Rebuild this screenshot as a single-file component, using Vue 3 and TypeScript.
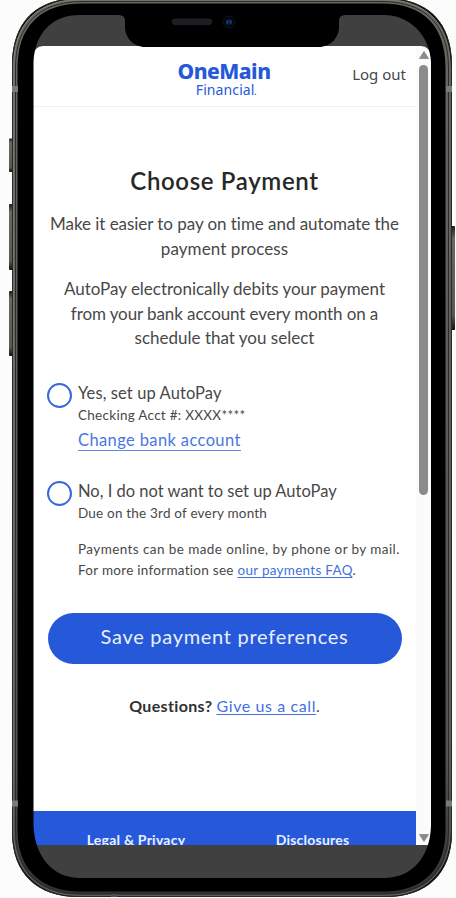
<script setup lang="ts">
interface PaymentOption {
  id: string
  title: string
  detail: string
}

const autoPay: PaymentOption = {
  id: 'autopay',
  title: 'Yes, set up AutoPay',
  detail: 'Checking Acct #: XXXX****',
}

const manualPay: PaymentOption = {
  id: 'manual',
  title: 'No, I do not want to set up AutoPay',
  detail: 'Due on the 3rd of every month',
}

const footerLinks: string[] = ['Legal & Privacy', 'Disclosures']
</script>

<template>
  <main class="stage">
    <div class="screen">
      <div class="page">
        <header class="header">
          <div class="logo">
            <span class="logo-top">OneMain</span>
            <span class="logo-sub">Financial<i>.</i></span>
          </div>
          <a class="logout">Log out</a>
        </header>

        <section class="intro">
          <h1>Choose Payment</h1>
          <p>
            <span class="l1">Make it easier to pay on time and automate the</span><br />
            <span class="l2">payment process</span>
          </p>
          <p>
            <span class="l3">AutoPay electronically debits your payment</span><br />
            <span class="l4">from your bank account every month on a</span><br />
            <span class="l5">schedule that you select</span>
          </p>
        </section>

        <section class="options">
          <div class="option">
            <span class="radio" role="radio"></span>
            <div class="body">
              <div class="title t1">{{ autoPay.title }}</div>
              <div class="detail d1">{{ autoPay.detail }}</div>
              <a class="change">Change bank account</a>
            </div>
          </div>
          <div class="option second">
            <span class="radio" role="radio"></span>
            <div class="body">
              <div class="title">{{ manualPay.title }}</div>
              <div class="detail d2">{{ manualPay.detail }}</div>
              <div class="note">
                <span class="n1">Payments can be made online, by phone or by mail.</span><br />
                <span class="n2">For more information see <a>our payments FAQ</a>.</span>
              </div>
            </div>
          </div>
        </section>

        <button class="save">Save payment preferences</button>
        <div class="questions"><b>Questions?</b> <a>Give us a call</a>.</div>

        <footer class="footer">
          <span v-for="link in footerLinks" :key="link">{{ link }}</span>
        </footer>
      </div>
      <div class="scrollbar">
        <svg class="arrow" viewBox="0 0 10 8"><path d="M5 .6 9.4 7.4H.6Z" /></svg>
        <div class="thumb"></div>
        <svg class="arrow down" viewBox="0 0 10 8"><path d="M.6.6H9.4L5 7.4Z" /></svg>
      </div>
    </div>

    <svg class="phone" viewBox="0 0 456 898" fill="none">
      <defs>
        <linearGradient id="key" x1="0" y1="0" x2="0" y2="1">
          <stop offset="0" stop-color="#1c1c1a" />
          <stop offset=".12" stop-color="#686862" />
          <stop offset=".86" stop-color="#5a5a55" />
          <stop offset="1" stop-color="#111" />
        </linearGradient>
        <linearGradient id="rim" x1="0" y1="0" x2="0" y2="1">
          <stop offset="0" stop-color="#68665f" />
          <stop offset=".85" stop-color="#55534f" />
          <stop offset="1" stop-color="#33322f" />
        </linearGradient>
      </defs>
      <g fill="url(#key)">
        <rect x="9" y="138.5" width="4" height="33.5" rx="1" />
        <rect x="9" y="204" width="4" height="66" rx="1" />
        <rect x="9" y="291" width="4" height="65" rx="1" />
        <rect x="451" y="226" width="4" height="104" rx="1" />
      </g>
      <path
        fill="#000"
        fill-rule="evenodd"
        d="M12 66C12 22 36-2 80-2H384C428-2 452 22 452 66V832C452 874 426 897 386 897H78C38 897 12 874 12 832ZM33.500 62C35 33 52 15 80 15H119Q125 15 125 21V27C125 38 134 47 145 47H319C330 47 339 38 339 27V21Q339 15 345 15H384C410 15 430 36 431 62V826C430 858 411 878 384 878H80C54 878 35 858 33.500 826Z"
      />
      <path
        stroke="url(#rim)"
        stroke-width="5"
        d="M15 68C15 25 39 1 82 1H382C425 1 448 25 448 68V830C448 871 424 894 384 894H80C40 894 15 871 15 830Z"
      />
      <path
        stroke="#292826"
        stroke-width="1"
        d="M12.500 66C12.500 22 36-1.500 80-1.500H384C428-1.500 451.500 22 451.500 66V832C451.500 874 426 896.500 386 896.500H78C38 896.500 12.500 874 12.500 832Z"
      />
      <path
        stroke="#2c2b29"
        stroke-width="1"
        d="M15.500 68C15.500 25 39 1.500 82 1.500H382C425 1.500 448.500 25 448.500 68V830C448.500 871 424 893.500 384 893.500H80C40 893.500 15.500 871 15.500 830Z"
      />
      <path
        stroke="#918f89"
        stroke-width=".6"
        d="M13.800 67C13.800 23 37 0 81 0H383C427 0 450.300 23 450.300 67V831C450.300 872 425 895.300 385 895.300H79C39 895.300 13.800 872 13.800 831Z"
      />
      <g fill="#757b7e">
        <rect x="12" y="86" width="6" height="6" />
        <rect x="446" y="86" width="6" height="6" />
        <rect x="12" y="800.500" width="6" height="6" />
        <rect x="446" y="800.500" width="6" height="6" />
        <rect x="111" y="894" width="6" height="3" fill="#4b5055" />
      </g>
      <rect x="172" y="18.500" width="40" height="6.500" rx="3.250" fill="#1d1e22" />
      <circle cx="229" cy="22" r="6" fill="#06070b" stroke="#131417" />
      <circle cx="229" cy="22" r="3" fill="#071d42" />
      <path d="M227.300 20.500v3M230.800 20.500v3" stroke="#1750a0" stroke-width="1.200" />
    </svg>
  </main>
</template>

<style>
body {
  margin: 0;
  background: #fcfcfc;
}
</style>

<style scoped>
* {
  box-sizing: border-box;
}
.stage {
  position: relative;
  width: 456px;
  height: 898px;
  overflow: hidden;
  padding: 15px 25px 20px 33px;
  font-family: Lato, "Open Sans", sans-serif;
  font-variant-ligatures: none;
  color: #484848;
}
.screen {
  display: flex;
  height: 863px;
  padding: 31px 0 33px;
  background: #404040;
  border-radius: 36px;
}
.phone {
  position: absolute;
  inset: 0;
  width: 456px;
  height: 898px;
  pointer-events: none;
}
.page {
  flex: none;
  width: 383px;
  height: 799px;
  display: flex;
  flex-direction: column;
  overflow: hidden;
  background: #fff;
  border-top-left-radius: 10px;
  white-space: nowrap;
}
.header {
  flex: none;
  height: 61px;
  border-bottom: 1px solid #f0f0ee;
  display: grid;
  grid-template-columns: 1fr auto 1fr;
  padding: 14px 10px 0;
}
.logo {
  grid-column: 2;
  display: flex;
  flex-direction: column;
  align-items: center;
  color: #2559da;
  font-family: "Noto Sans", sans-serif;
}
.logo-top {
  margin-right: 1px;
  font-size: 21px;
  line-height: 23px;
  font-weight: 800;
  letter-spacing: -0.5px;
}
.logo-sub {
  margin-left: 4px;
  font-size: 14px;
  line-height: 14px;
  letter-spacing: 0.1px;
}
.logo-sub i {
  font-size: 10px;
}
.logout {
  justify-self: end;
  font-family: "Noto Sans", sans-serif;
  font-size: 15px;
  line-height: 28px;
}
.intro {
  flex: none;
  padding-top: 57px;
  text-align: center;
}
h1 {
  margin: 0 0 14px;
  font-size: 24px;
  line-height: 34px;
  font-weight: 600;
  letter-spacing: 0.65px;
  color: #282828;
}
.intro p {
  margin: 0 0 16px;
  font-size: 17px;
  line-height: 24.600px;
}
.l1 {
  letter-spacing: -0.05px;
}
.l4 {
  letter-spacing: -0.09px;
}
.l2 {
  letter-spacing: 0.1px;
}
.l3 {
  letter-spacing: -0.02px;
}
.options {
  flex: none;
  padding: 14px 14px 0;
}
.option {
  display: flex;
  gap: 6px;
  height: 98px;
}
.option.second {
  height: 119px;
}
.radio {
  flex: none;
  width: 25px;
  height: 25px;
  margin-top: 2px;
  border: 2px solid #3768df;
  border-radius: 50%;
}
.title {
  font-size: 16.500px;
  line-height: 24px;
}
.t1 {
  letter-spacing: 0.1px;
}
.detail {
  font-size: 13.500px;
  line-height: 20px;
}
.d1 {
  letter-spacing: 0.28px;
}
.d2 {
  letter-spacing: 0.2px;
}
.change {
  display: inline-block;
  margin-top: 5px;
  font-size: 16.500px;
  line-height: 20px;
  letter-spacing: 0.38px;
  color: #4a76e3;
  border-bottom: 1px solid #6088e6;
}
.note {
  margin-top: 16px;
  font-size: 13.500px;
  line-height: 21.500px;
}
.n1 {
  letter-spacing: 0.42px;
}
.n2 {
  letter-spacing: 0.28px;
}
.note a,
.questions a {
  color: #4471df;
  text-decoration: underline;
  text-decoration-thickness: 1px;
  text-underline-offset: 2px;
}
.save {
  flex: none;
  width: 354px;
  height: 51px;
  margin: 15px 0 0 14.500px;
  padding: 0 0 4px;
  border: 0;
  border-radius: 26px;
  background: #2559da;
  color: #e9effc;
  font: 20px/30px Lato, sans-serif;
  letter-spacing: 0.72px;
}
.questions {
  flex: none;
  margin-top: 30px;
  text-align: center;
  font-size: 16px;
  line-height: 24px;
}
.questions b {
  color: #303030;
  letter-spacing: 0.35px;
}
.questions a {
  letter-spacing: 0.6px;
}
.footer {
  flex: none;
  height: 34px;
  margin-top: auto;
  padding: 19px 10px 0;
  display: grid;
  grid-template-columns: 186px 167px;
  text-align: center;
  font-size: 14px;
  line-height: 20px;
  font-weight: 700;
  letter-spacing: 0.23px;
  color: #e9effc;
  background: #2559da;
}
.scrollbar {
  flex: none;
  width: 15px;
  height: 799px;
  display: flex;
  flex-direction: column;
  align-items: center;
  padding: 5px 0 3px;
  background: #fbfbfb;
  border-top-right-radius: 10px;
}
.arrow {
  flex: none;
  width: 10px;
  height: 8px;
  fill: #8b8b8b;
  stroke: #8b8b8b;
  stroke-linejoin: round;
}
.arrow.down {
  margin-top: auto;
}
.thumb {
  width: 9px;
  height: 430px;
  margin-top: 6px;
  border-radius: 5px;
  background: #8b8b8b;
}
</style>
